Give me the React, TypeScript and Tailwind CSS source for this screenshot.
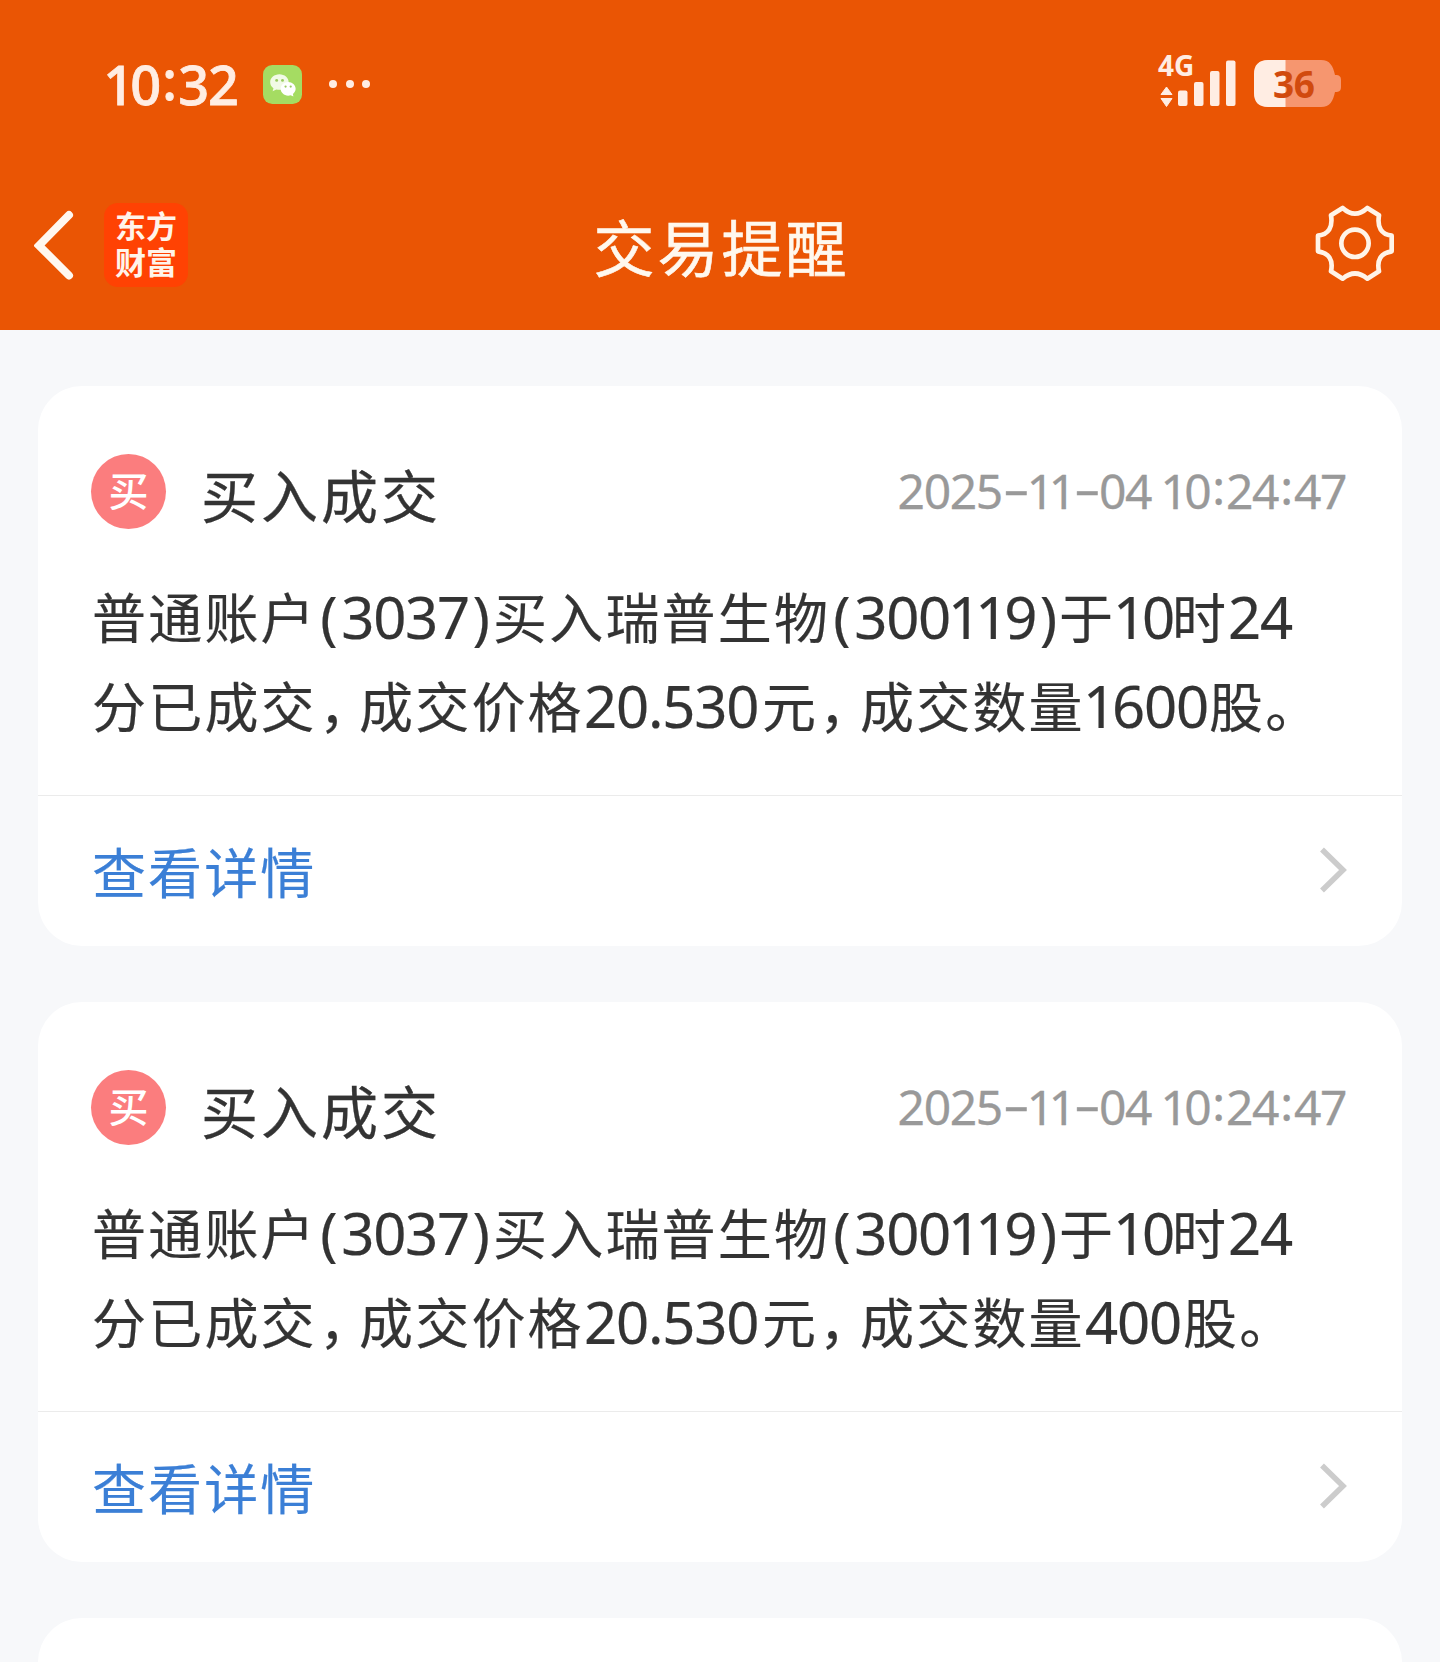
import React from "react";
import clsx from "clsx";

type Run = { text: string; className?: string; num?: boolean };

type Notice = {
	id: number;
	title: string;
	time: string;
	lines: Run[][];
};

const firstLine: Run[] = [
	{ text: "普通账户", className: "w-[226px]" },
	{ text: "(3037)", num: true, className: "w-[175px]" },
	{ text: "买入瑞普生物", className: "w-[338px]" },
	{ text: "(300119)", num: true, className: "w-[228px]" },
	{ text: "于", className: "w-[56px]" },
	{ text: "10", num: true, className: "w-[57px]" },
	{ text: "时", className: "w-[56px]" },
	{ text: "24", num: true },
];

const secondLine: Run[] = [
	{ text: "分已成交", className: "w-[227px]" },
	{ text: "，", className: "w-[40px] [font-feature-settings:'halt']" },
	{ text: "成交价格", className: "w-[225px]" },
	{ text: "20.530", num: true, className: "w-[178px]" },
	{ text: "元", className: "w-[57px]" },
	{ text: "，", className: "w-[41px] [font-feature-settings:'halt']" },
	{ text: "成交数量", className: "w-[225px]" },
];

const notices: Notice[] = [
	{
		id: 1,
		title: "买入成交",
		time: "2025-11-04 10:24:47",
		lines: [
			firstLine,
			[...secondLine, { text: "1600", num: true, className: "w-[124px]" }, { text: "股。" }],
		],
	},
	{
		id: 2,
		title: "买入成交",
		time: "2025-11-04 10:24:47",
		lines: [
			firstLine,
			[...secondLine, { text: "400", num: true, className: "w-[98px]" }, { text: "股。" }],
		],
	},
];

// per-character side spacing, in em so it follows the font size
const GLYPH: Record<string, string> = {
	"1": "-ml-[0.035em] -mr-[0.05em]",
	"(": "ml-[0.04em] mr-[0.08em]",
	")": "ml-[0.06em]",
	":": "mx-[0.045em] -translate-y-[0.085em]",
	"-": "mx-[0.13em] scale-x-[1.75] -translate-y-[0.06em]",
};

const Digits = ({ text, className }: { text: string; className?: string }) => (
	<span className={clsx("font-['Noto_Sans',sans-serif] whitespace-pre", className)}>
		{text.split("").map((c, i) =>
			GLYPH[c] ? (
				<span key={i} className={clsx("inline-block", GLYPH[c])}>
					{c}
				</span>
			) : (
				c
			),
		)}
	</span>
);

const WechatIcon = () => (
	<svg width="39" height="39" viewBox="0 0 38 38" className="shrink-0">
		<rect width="38" height="38" rx="9" fill="#a5dc62" />
		<path d="M16 9c-5 0-9 3.500-9 7.700 0 2.500 1.200 4.500 3.200 5.900l-.8 3 3.600-1.800c1 .2 2 .4 3 .4 5 0 9-3.300 9-7.500S21 9 16 9z" fill="#f1fae6" />
		<path d="M24.500 16.500c-4 0-7.300 3-7.300 6.700s3.300 6.700 7.300 6.700c.9 0 1.700-.1 2.500-.4l2.600 1.200-.4-2.500c1.600-1.200 2.600-3 2.600-5 0-3.700-3.300-6.700-7.300-6.700z" fill="#fff" />
		<g fill="#9acb62">
			<circle cx="13.300" cy="15" r="1.400" />
			<circle cx="19" cy="15" r="1.400" />
			<circle cx="22" cy="21" r="1.100" />
			<circle cx="27" cy="21" r="1.100" />
		</g>
	</svg>
);

const SignalBars = () => (
	<svg width="78" height="54" viewBox="0 0 78 54" fill="#ffede3" className="absolute left-0 top-0">
		<path d="M8.500 34l5.500 7.500h-11zM8.500 53.500L3 45.500h11z" stroke="#ffede3" strokeWidth="1" strokeLinejoin="round" />
		<rect x="20" y="37.500" width="9.500" height="15.500" rx="2" />
		<rect x="36" y="29" width="9.500" height="24" rx="2" />
		<rect x="52" y="18" width="9.500" height="35" rx="2" />
		<rect x="68" y="7.500" width="9.500" height="45.500" rx="2" />
	</svg>
);

const Battery = () => (
	<div className="relative w-[87px] h-[47px]">
		<svg width="87" height="47" viewBox="0 0 87 47" className="block">
			<path d="M14 0H67C76 0 79 6 81 15C86 15 87 17 87 20V27C87 30 86 32 81 32C79 41 76 47 67 47H14C5 47 0 42 0 33V14C0 5 5 0 14 0Z" fill="#f6966f" />
			<path d="M14 0H31.500V47H14C5 47 0 42 0 33V14C0 5 5 0 14 0Z" fill="#ffede3" />
		</svg>
		<span className="absolute left-[19px] top-0 leading-[48px] font-['Noto_Sans',sans-serif] font-bold text-[37px] tracking-[-0.5px] text-[#d14a0e]">
			36
		</span>
	</div>
);

const GearIcon = () => (
	<svg width="130" height="110" viewBox="0 0 390 330" fill="none" stroke="#fff4e8" strokeWidth="14" strokeLinejoin="round" className="shrink-0">
		<path d="M158 54Q195 88 232 54L267 76Q258 130 305 137V184Q256 192 267 244L232 266Q195 235 158 266L123 244Q134 192 84 184V137Q132 130 123 76Z" />
		<circle cx="195" cy="160" r="41" />
	</svg>
);

const StatusBar = () => (
	<div className="h-[160px] pl-[105px] pr-[99px] pt-[54px] flex items-start justify-between">
		<div className="flex items-center h-[60px]">
			<Digits
				text="10:32"
				className="w-[158px] font-medium text-[54px] leading-[60px] tracking-[-1.200px] text-[#ffede3] [-webkit-text-stroke:0.8px]"
			/>
			<WechatIcon />
			<div className="ml-[27px] flex gap-[8.500px]">
				<i className="size-2 rounded-full bg-[#ffede3]" />
				<i className="size-2 rounded-full bg-[#ffede3]" />
				<i className="size-2 rounded-full bg-[#ffede3]" />
			</div>
		</div>
		<div className="flex items-start">
			<div className="relative w-[96px] h-[54px] -mt-[1px]">
				<SignalBars />
				<span className="absolute left-0 -top-[2px] font-['Noto_Sans',sans-serif] font-bold text-[28px] leading-[28px] text-[#ffede3]">
					4G
				</span>
			</div>
			<div className="mt-[6px]">
				<Battery />
			</div>
		</div>
	</div>
);

const TitleBar = () => (
	<div className="h-[170px] flex items-start justify-between pl-[34px] pr-[20px]">
		<div className="flex w-[300px] items-center pt-[43px]">
			<svg width="40" height="70" viewBox="0 0 40 70" fill="none" stroke="#fff8f0" strokeWidth="8" strokeLinecap="round">
				<path d="M35 5L5 35.500L35 65.500" />
			</svg>
			<div className="ml-[30px] size-[84px] rounded-[14px] bg-[#ff4203] pt-[4px] text-center font-bold text-[31px] leading-[36px] text-[#fff4ea]">
				<div>东方</div>
				<div>财富</div>
			</div>
		</div>
		<h1 className="-ml-[11px] pt-[42px] text-[61px] leading-[88px] tracking-[3px] text-[#fff8ee] [-webkit-text-stroke:0.6px]">
			交易提醒
		</h1>
		<div className="flex w-[300px] justify-end pt-[30px]">
			<GearIcon />
		</div>
	</div>
);

const NoticeCard = ({ notice }: { notice: Notice }) => (
	<div className="h-[560px] shrink-0 rounded-[44px] bg-white">
		<div className="h-[410px] border-b border-[#ebebeb] pl-[53px] pr-[56px] pt-[60px]">
			<div className="flex h-[93px] items-center">
				<div className="size-[75px] -mt-[3px] rounded-full bg-[#fb7d7e] text-center text-[40px] font-medium leading-[71px] text-white">
					买
				</div>
				<h2 className="ml-[35px] mt-[1px] text-[57px] leading-[80px] tracking-[3px] [-webkit-text-stroke:0.3px]">
					{notice.title}
				</h2>
				<time className="ml-auto -mt-[6px] text-[48px] leading-[60px] tracking-[-1.400px] text-[#999] [-webkit-text-stroke:0.3px]">
					<Digits text={notice.time} />
				</time>
			</div>
			<div className="pt-[32px]">
				{notice.lines.map((line, i) => (
					<p key={i} className="flex h-[89px] items-baseline whitespace-nowrap pl-px text-[54px] leading-[89px] [-webkit-text-stroke:0.2px]">
						{line.map((run, j) =>
							run.num ? (
								<Digits key={j} text={run.text} className={clsx("block shrink-0 text-[58px] tracking-[-1.200px]", run.className)} />
							) : (
								<span key={j} className={clsx("block shrink-0 tracking-[2.200px]", run.className)}>
									{run.text}
								</span>
							),
						)}
					</p>
				))}
			</div>
		</div>
		<a className="flex h-[150px] items-center justify-between pl-[54px] pr-[55px]">
			<span className="text-[54px] leading-[80px] tracking-[2.100px] text-[#3b7fd6] [-webkit-text-stroke:0.2px]">
				查看详情
			</span>
			<svg width="28" height="48" viewBox="0 0 28 48" fill="none" stroke="#ccc" strokeWidth="5.500" className="-mt-[2px]">
				<path d="M3 3.500L24 24L3 44.500" />
			</svg>
		</a>
	</div>
);

const App = () => {
	return (
		<div className="h-[1662px] w-[1440px] overflow-hidden bg-[#f7f8fa] font-['Noto_Sans_CJK_SC',sans-serif] text-[#333]">
			<header className="h-[330px] bg-[#ea5504]">
				<StatusBar />
				<TitleBar />
			</header>
			<main className="flex flex-col gap-[56px] px-[38px] pt-[56px]">
				{notices.map((notice) => (
					<NoticeCard key={notice.id} notice={notice} />
				))}
				<div className="h-[560px] shrink-0 rounded-[44px] bg-white" />
			</main>
		</div>
	);
};

export default App;
